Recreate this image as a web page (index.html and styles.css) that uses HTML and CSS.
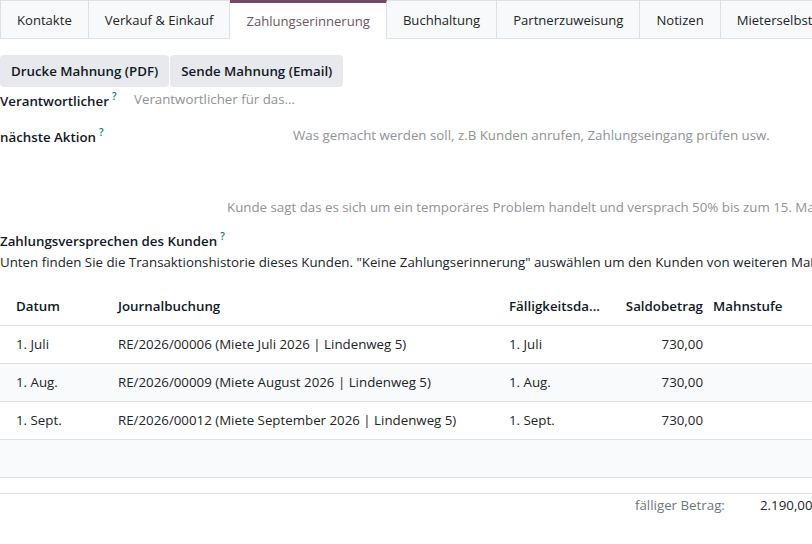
FILE: index.html
```html
<!DOCTYPE html>
<html lang="de">
<head>
<meta charset="utf-8">
<title>Zahlungserinnerung</title>
<link rel="stylesheet" href="styles.css">
</head>
<body>
<div class="page">
  <nav class="tabs">
    <a class="tab first">Kontakte</a>
    <a class="tab">Verkauf &amp; Einkauf</a>
    <a class="tab active">Zahlungserinnerung</a>
    <a class="tab">Buchhaltung</a>
    <a class="tab">Partnerzuweisung</a>
    <a class="tab">Notizen</a>
    <a class="tab">Mieterselbstauskunft</a>
  </nav>

  <div class="actions">
    <button class="btn">Drucke Mahnung (PDF)</button>
    <button class="btn">Sende Mahnung (Email)</button>
  </div>

  <div class="field">
    <label class="label">Verantwortlicher<sup class="help">?</sup></label>
    <div class="input placeholder">Verantwortlicher für das...</div>
  </div>

  <div class="field field-top">
    <label class="label">nächste Aktion<sup class="help">?</sup></label>
    <div class="textarea placeholder">Was gemacht werden soll, z.B Kunden anrufen, Zahlungseingang prüfen usw.</div>
  </div>

  <div class="note placeholder">Kunde sagt das es sich um ein temporäres Problem handelt und versprach 50% bis zum 15. Mai zu zahlen.</div>

  <div class="section-label">Zahlungsversprechen des Kunden<sup class="help">?</sup></div>
  <p class="desc">Unten finden Sie die Transaktionshistorie dieses Kunden. "Keine Zahlungserinnerung" auswählen um den Kunden von weiteren Maßnahmen auszuschließen.</p>

  <table class="grid">
    <colgroup>
      <col class="c-date">
      <col class="c-move">
      <col class="c-due">
      <col class="c-amount">
      <col class="c-level">
    </colgroup>
    <thead>
      <tr>
        <th>Datum</th>
        <th>Journalbuchung</th>
        <th>Fälligkeitsda...</th>
        <th class="num">Saldobetrag</th>
        <th class="lvl">Mahnstufe</th>
      </tr>
    </thead>
    <tbody>
      <tr>
        <td>1. Juli</td>
        <td>RE/2026/00006 (Miete Juli 2026 | Lindenweg 5)</td>
        <td>1. Juli</td>
        <td class="num">730,00</td>
        <td class="lvl"></td>
      </tr>
      <tr class="alt">
        <td>1. Aug.</td>
        <td>RE/2026/00009 (Miete August 2026 | Lindenweg 5)</td>
        <td>1. Aug.</td>
        <td class="num">730,00</td>
        <td class="lvl"></td>
      </tr>
      <tr>
        <td>1. Sept.</td>
        <td>RE/2026/00012 (Miete September 2026 | Lindenweg 5)</td>
        <td>1. Sept.</td>
        <td class="num">730,00</td>
        <td class="lvl"></td>
      </tr>
      <tr class="alt empty">
        <td></td><td></td><td></td><td></td><td></td>
      </tr>
    </tbody>
  </table>

  <div class="totals">
    <span class="total-label">fälliger Betrag:</span>
    <span class="total-value">2.190,00</span>
  </div>
</div>
</body>
</html>
```

FILE: styles.css
```css
* { box-sizing: border-box; }
html, body {
  margin: 0;
  padding: 0;
  background: #fff;
  overflow: hidden;
}
body {
  font-family: "Open Sans", "Noto Sans", sans-serif;
  font-size: 13.3px;
  color: #212529;
}
.page {
  width: 926px;
}

/* tabs */
.tabs {
  display: flex;
  border-bottom: 1px solid #dee2e6;
  font-size: 13.1px;
}
.tab {
  height: 38px;
  line-height: 38px;
  padding: 0 16px;
  border-top: 1px solid #dee2e6;
  border-right: 1px solid #dee2e6;
  background: #f8f9fa;
  color: #212529;
  white-space: nowrap;
}
.tab.first { border-left: 1px solid #dee2e6; }
.tab.active {
  background: #fff;
  border-top: 3px solid #714b67;
  line-height: 36px;
  height: 39px;
  margin-bottom: -1px;
  color: #6f5269;
}

/* buttons */
.actions {
  display: flex;
  gap: 1px;
  margin-top: 16px;
}
.btn {
  height: 32px;
  padding: 0 11px;
  border: none;
  border-radius: 4px;
  background: #e7e9ed;
  font: inherit;
  font-weight: 600;
  color: #111827;
}

/* fields */
.field {
  display: flex;
  align-items: center;
  height: 24px;
}
.field-top {
  align-items: flex-start;
  margin-top: 14px;
  height: 58px;
}
.label {
  width: 134px;
  flex: none;
  font-weight: 600;
  color: #111827;
  white-space: nowrap;
}
.help {
  color: #017e84;
  font-size: 10px;
  font-weight: 600;
  margin-left: 3px;
  vertical-align: 6px;
}
.placeholder {
  color: #8f9297;
  white-space: nowrap;
}
.textarea {
  padding-left: 159px;
  padding-top: 1px;
}
.note {
  margin-top: 12px;
  padding-left: 227px;
  height: 24px;
  line-height: 24px;
  overflow: hidden;
}
.section-label {
  margin-top: 6px;
  font-weight: 600;
  color: #111827;
  line-height: 22px;
}
.desc {
  margin: 0;
  line-height: 20px;
  white-space: nowrap;
}

/* table */
.grid {
  margin-top: 16px;
  border-collapse: collapse;
  table-layout: fixed;
  width: 926px;
}
.c-date { width: 102px; }
.c-move { width: 391px; }
.c-due { width: 120px; }
.c-amount { width: 95px; }
.c-level { width: 218px; }
.grid th, .grid td {
  padding: 0 0 0 16px;
  text-align: left;
  white-space: nowrap;
  overflow: hidden;
}
.grid th {
  height: 37px;
  font-weight: 600;
  color: #111827;
  border-bottom: 1px solid #dee2e6;
}
.grid td {
  height: 38px;
  border-bottom: 1px solid #dee2e6;
}
.grid .num {
  text-align: right;
  padding: 0 5px 0 0;
}
.grid .lvl {
  padding-left: 5px;
}
.grid tr.alt td { background: #f9fafb; }

/* totals */
.totals {
  margin-top: 15px;
  border-top: 1px solid #dee2e6;
  display: flex;
  padding-top: 0;
  line-height: 22px;
}
.total-label {
  margin-left: 635px;
  width: 125px;
  color: #6c757d;
}
.total-value {
  color: #212529;
}
```
